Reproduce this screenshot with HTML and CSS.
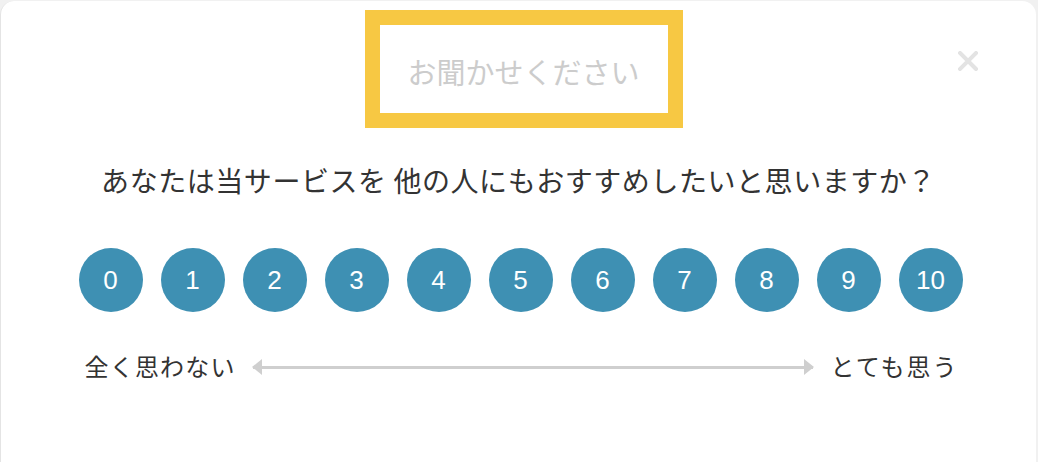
FILE: index.html
```html
<!DOCTYPE html>
<html lang="ja">
<head>
<meta charset="utf-8">
<link rel="stylesheet" href="styles.css">
</head>
<body>
<div class="card">
  <button class="close" aria-label="close">
    <svg width="20" height="20" viewBox="0 0 20 20"><path d="M2 2 L18 18 M18 2 L2 18" stroke="#e3e3e3" stroke-width="4" stroke-linecap="square"/></svg>
  </button>
  <div class="head">
    <div class="title-box">お聞かせください</div>
  </div>
  <p class="question">あなたは当サービスを 他の人にもおすすめしたいと思いますか？</p>
  <div class="scores">
    <span class="score">0</span>
    <span class="score">1</span>
    <span class="score">2</span>
    <span class="score">3</span>
    <span class="score">4</span>
    <span class="score">5</span>
    <span class="score">6</span>
    <span class="score">7</span>
    <span class="score">8</span>
    <span class="score">9</span>
    <span class="score">10</span>
  </div>
  <div class="labels">
    <span class="label">全く思わない</span>
    <span class="arrow"></span>
    <span class="label label-right">とても思う</span>
  </div>
</div>
</body>
</html>
```
FILE: styles.css
```css
html, body {
  margin: 0;
  padding: 0;
  height: 100%;
}
body {
  background: #f1f1f1;
  font-family: "Noto Sans CJK JP", "Noto Sans", sans-serif;
  overflow: hidden;
}
.card {
  position: relative;
  box-sizing: border-box;
  margin: 1px 2px 0 0;
  height: calc(100% - 1px);
  background: #fff;
  border-left: 1px solid #e4e4e4;
  border-radius: 14px 14px 0 0;
  padding-top: 9px;
}
.close {
  position: absolute;
  top: 50px;
  left: 957px;
  width: 20px;
  height: 20px;
  padding: 0;
  border: 0;
  background: none;
}
.close svg { display: block; }
.head {
  display: flex;
  justify-content: center;
  padding-left: 10px;
}
.title-box {
  box-sizing: border-box;
  width: 318px;
  height: 118px;
  border: 15px solid #f7c843;
  display: flex;
  align-items: center;
  justify-content: center;
  color: #cccccc;
  font-size: 29px;
  padding-top: 4px;
}
.question {
  margin: 32px 0 0;
  text-align: center;
  font-size: 28px;
  line-height: 40px;
  color: #333;
  letter-spacing: 0.55px;
}
.scores {
  display: flex;
  justify-content: center;
  gap: 18px;
  margin-top: 48px;
  padding-left: 4px;
}
.score {
  width: 64px;
  height: 64px;
  border-radius: 50%;
  background: #3e90b3;
  color: #fff;
  display: flex;
  align-items: center;
  justify-content: center;
  font-family: "Liberation Sans", Arial, sans-serif;
  font-size: 26px;
}
.labels {
  display: flex;
  align-items: center;
  width: 874px;
  margin: 38px auto 0;
  padding-left: 6px;
  gap: 17px;
}
.label {
  font-size: 24px;
  line-height: 32px;
  color: #333;
  letter-spacing: 1.2px;
}
.label-right {
  letter-spacing: 2px;
}
.arrow {
  position: relative;
  flex: 1;
  height: 3px;
  background: #cfcfcf;
  margin: 2px 0 0;
}
.arrow::before,
.arrow::after {
  content: "";
  position: absolute;
  top: -7px;
  border-top: 8px solid transparent;
  border-bottom: 8px solid transparent;
}
.arrow::before {
  left: -1px;
  border-right: 10px solid #cfcfcf;
}
.arrow::after {
  right: -1px;
  border-left: 10px solid #cfcfcf;
}
```
